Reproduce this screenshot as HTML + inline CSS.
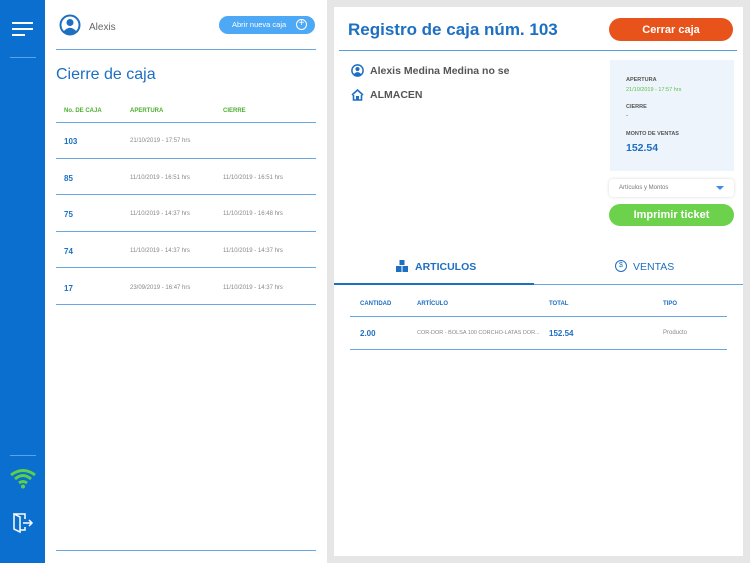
<!DOCTYPE html>
<html><head><meta charset="utf-8"><style>
*{margin:0;padding:0;box-sizing:border-box}
body{width:750px;height:563px;position:relative;overflow:hidden;background:#e6e6e6;font-family:"Liberation Sans",sans-serif}
.a{position:absolute}
.side{left:0;top:0;width:45px;height:563px;background:#0b6fcf}
.lp{left:45px;top:0;width:282px;height:563px;background:#fff}
.card{left:334px;top:7px;width:409px;height:549px;background:#fff}
.hl{height:1px;background:#6aa6e0}
.th{font-size:6px;font-weight:bold;color:#4caf30}
.num{font-size:8px;font-weight:bold;color:#1d6fc2}
.dt{font-size:6px;color:#888}
.bth{font-size:6px;font-weight:bold;color:#1d6fc2}
.btn{display:flex;align-items:center;justify-content:center}
</style></head><body>
<div class="a side">
 <div class="a" style="left:12px;top:22px;width:21px;height:2px;background:#fff"></div>
 <div class="a" style="left:12px;top:28px;width:21px;height:2px;background:#fff"></div>
 <div class="a" style="left:12px;top:34px;width:13px;height:2px;background:#fff"></div>
 <div class="a" style="left:10px;top:57px;width:26px;height:1px;background:#5aa3ea"></div>
 <div class="a" style="left:10px;top:455px;width:26px;height:1px;background:#5aa3ea"></div>
 <svg class="a" style="left:9px;top:467px" width="28" height="22" viewBox="0 0 28 22"><path d="M2 8 Q14 -1 26 8" stroke="#5cd04a" stroke-width="3" fill="none"/><path d="M6 12 Q14 5 22 12" stroke="#5cd04a" stroke-width="3" fill="none"/><path d="M10 16 Q14 13 18 16" stroke="#5cd04a" stroke-width="3" fill="none"/><circle cx="14" cy="19.5" r="2" fill="#5cd04a"/></svg>
 <svg class="a" style="left:12px;top:512px" width="22" height="22" viewBox="0 0 22 22"><path d="M2 2 H13 V7 M13 15 V18 H8" stroke="#fff" stroke-width="1.5" fill="none"/><path d="M2 2 L8 5 V20 L2 17 Z" stroke="#fff" stroke-width="1.5" fill="none"/><path d="M11 11 H20 M17 8 L20 11 L17 14" stroke="#fff" stroke-width="1.5" fill="none"/></svg>
</div>
<div class="a lp">
 <svg class="a" style="left:14px;top:14px" width="22" height="22" viewBox="0 0 22 22"><circle cx="11" cy="11" r="9.5" fill="none" stroke="#1d6fc2" stroke-width="2"/><circle cx="11" cy="8.5" r="3.5" fill="#1d6fc2"/><path d="M4.5 17.5 Q11 10 17.5 17.5 Q11 22 4.5 17.5Z" fill="#1d6fc2"/></svg>
 <div class="a" style="left:44px;top:22px;font-size:10px;color:#666">Alexis</div>
 <div class="a" style="left:174px;top:16px;width:96px;height:18px;border-radius:9px;background:#4da8f5;color:#fff;font-size:7.5px;line-height:18px;padding-left:13px">Abrir nueva caja<span style="position:absolute;right:8px;top:3px;width:11px;height:11px;border:1.2px solid #fff;border-radius:50%;font-size:10px;line-height:8px;text-align:center">+</span></div>
 <div class="a hl" style="left:11px;top:49px;width:260px"></div>
 <div class="a" style="left:11px;top:66px;font-size:16px;color:#1d6fc2">Cierre de caja</div>
 <div class="a th" style="left:19px;top:108px">No. DE CAJA</div>
 <div class="a th" style="left:85px;top:108px">APERTURA</div>
 <div class="a th" style="left:178px;top:108px">CIERRE</div>
 <div class="a hl" style="left:11px;top:122px;width:260px"></div>
 <div class="a num" style="left:19px;top:137px">103</div><div class="a dt" style="left:85px;top:138px">21/10/2019 - 17:57 hrs</div>
 <div class="a hl" style="left:11px;top:158px;width:260px"></div>
 <div class="a num" style="left:19px;top:174px">85</div><div class="a dt" style="left:85px;top:175px">11/10/2019 - 16:51 hrs</div><div class="a dt" style="left:178px;top:175px">11/10/2019 - 16:51 hrs</div>
 <div class="a hl" style="left:11px;top:194px;width:260px"></div>
 <div class="a num" style="left:19px;top:210px">75</div><div class="a dt" style="left:85px;top:211px">11/10/2019 - 14:37 hrs</div><div class="a dt" style="left:178px;top:211px">11/10/2019 - 16:48 hrs</div>
 <div class="a hl" style="left:11px;top:231px;width:260px"></div>
 <div class="a num" style="left:19px;top:247px">74</div><div class="a dt" style="left:85px;top:248px">11/10/2019 - 14:37 hrs</div><div class="a dt" style="left:178px;top:248px">11/10/2019 - 14:37 hrs</div>
 <div class="a hl" style="left:11px;top:267px;width:260px"></div>
 <div class="a num" style="left:19px;top:284px">17</div><div class="a dt" style="left:85px;top:285px">23/09/2019 - 16:47 hrs</div><div class="a dt" style="left:178px;top:285px">11/10/2019 - 14:37 hrs</div>
 <div class="a hl" style="left:11px;top:304px;width:260px"></div>
 <div class="a hl" style="left:11px;top:550px;width:260px"></div>
</div>
<div class="a card">
 <div class="a" style="left:14px;top:13px;font-size:17px;font-weight:bold;color:#1d6fc2">Registro de caja núm. 103</div>
 <div class="a btn" style="left:275px;top:11px;width:124px;height:23px;border-radius:12px;background:#e8531c;color:#fff;font-size:11px;font-weight:bold">Cerrar caja</div>
 <div class="a hl" style="left:5px;top:43px;width:398px;background:#5a9edc"></div>
 <svg class="a" style="left:17px;top:57px" width="13" height="13" viewBox="0 0 22 22"><circle cx="11" cy="11" r="9.5" fill="none" stroke="#1d6fc2" stroke-width="2.5"/><circle cx="11" cy="8.5" r="3.5" fill="#1d6fc2"/><path d="M4.5 17.5 Q11 10 17.5 17.5 Q11 22 4.5 17.5Z" fill="#1d6fc2"/></svg>
 <div class="a" style="left:36px;top:58px;font-size:10.5px;font-weight:bold;color:#555">Alexis Medina Medina no se</div>
 <svg class="a" style="left:17px;top:82px" width="13" height="12" viewBox="0 0 13 12"><path d="M1 6 L6.5 1 L12 6" stroke="#1d6fc2" stroke-width="1.6" fill="none"/><path d="M2.5 6 V11 H10.5 V6" stroke="#1d6fc2" stroke-width="1.6" fill="none"/><rect x="5" y="7" width="3" height="4" fill="#1d6fc2"/></svg>
 <div class="a" style="left:36px;top:82px;font-size:10.5px;font-weight:bold;color:#555">ALMACEN</div>
 <div class="a" style="left:276px;top:53px;width:124px;height:111px;background:#eef4fb"></div>
 <div class="a" style="left:292px;top:70px;font-size:5.5px;font-weight:bold;color:#555">APERTURA</div>
 <div class="a" style="left:292px;top:80px;font-size:5.5px;color:#5cc04a">21/10/2019 - 17:57 hrs</div>
 <div class="a" style="left:292px;top:97px;font-size:5.5px;font-weight:bold;color:#555">CIERRE</div>
 <div class="a" style="left:292px;top:106px;font-size:6px;color:#555">-</div>
 <div class="a" style="left:292px;top:124px;font-size:5.5px;font-weight:bold;color:#555">MONTO DE VENTAS</div>
 <div class="a" style="left:292px;top:135px;font-size:10.5px;font-weight:bold;color:#1d6fc2">152.54</div>
 <div class="a" style="left:275px;top:172px;width:125px;height:18px;border-radius:4px;background:#fff;box-shadow:0 0 3px rgba(0,0,0,.15);font-size:6px;color:#777;line-height:18px;padding-left:10px">Artículos y Montos<span style="position:absolute;right:10px;top:7px;border-left:4px solid transparent;border-right:4px solid transparent;border-top:4px solid #3a8ee6"></span></div>
 <div class="a btn" style="left:275px;top:197px;width:125px;height:22px;border-radius:11px;background:#6cd24c;color:#fff;font-size:11px;font-weight:bold">Imprimir ticket</div>
 <svg class="a" style="left:62px;top:253px" width="12" height="12" viewBox="0 0 12 12"><rect x="3.5" y="0" width="5" height="5" fill="#1d6fc2"/><rect x="0" y="6" width="5.5" height="6" fill="#1d6fc2"/><rect x="6.5" y="6" width="5.5" height="6" fill="#1d6fc2"/></svg>
 <div class="a" style="left:81px;top:254px;font-size:10.5px;font-weight:bold;color:#1d6fc2">ARTICULOS</div>
 <div class="a" style="left:281px;top:253px;width:12px;height:12px;border:1.2px solid #1d6fc2;border-radius:50%;font-size:7px;color:#1d6fc2;text-align:center;line-height:10px">$</div>
 <div class="a" style="left:299px;top:254px;font-size:10.5px;color:#1d6fc2">VENTAS</div>
 <div class="a" style="left:0;top:276px;width:200px;height:2px;background:#1d6fc2"></div>
 <div class="a hl" style="left:200px;top:277px;width:209px"></div>
 <div class="a bth" style="left:26px;top:294px">CANTIDAD</div>
 <div class="a bth" style="left:83px;top:294px">ARTÍCULO</div>
 <div class="a bth" style="left:215px;top:294px">TOTAL</div>
 <div class="a bth" style="left:329px;top:294px">TIPO</div>
 <div class="a hl" style="left:16px;top:309px;width:377px"></div>
 <div class="a num" style="left:26px;top:322px">2.00</div>
 <div class="a dt" style="left:83px;top:323px;font-size:5.5px;width:125px;white-space:nowrap;overflow:hidden">COR-DOR - BOLSA 100 CORCHO-LATAS DOR...</div>
 <div class="a num" style="left:215px;top:322px">152.54</div>
 <div class="a dt" style="left:329px;top:323px">Producto</div>
 <div class="a hl" style="left:16px;top:342px;width:377px"></div>
</div>
</body></html>
